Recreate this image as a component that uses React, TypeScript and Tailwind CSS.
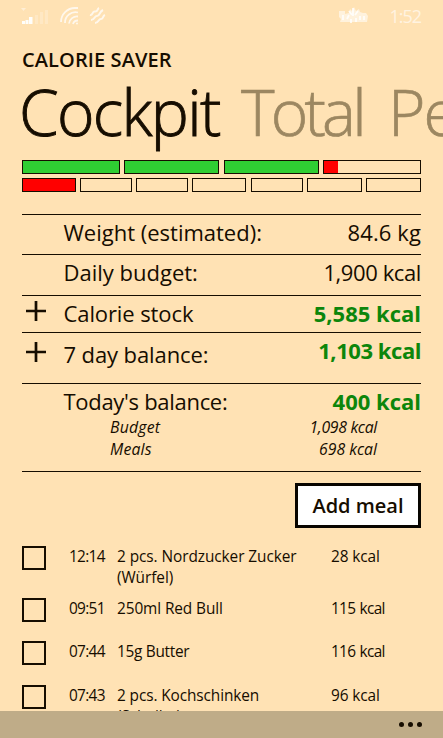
import React from "react";
import clsx from "clsx";

interface SummaryRowProps {
  label: string;
  value: string;
  expandable?: boolean;
  positive?: boolean;
  className?: string;
  labelClassName?: string;
  valueClassName?: string;
  iconClassName?: string;
}

interface Meal {
  time: string;
  name: string;
  kcal: string;
  className: string;
  nameClassName: string;
  kcalClassName: string;
}

const meals: Meal[] = [
  {
    time: "12:14",
    name: "2 pcs. Nordzucker Zucker (Würfel)",
    kcal: "28 kcal",
    className: "h-[52px]",
    nameClassName: "tracking-[-0.07px]",
    kcalClassName: "tracking-[-0.1px]",
  },
  {
    time: "09:51",
    name: "250ml Red Bull",
    kcal: "115 kcal",
    className: "h-[43px]",
    nameClassName: "tracking-[-0.1px]",
    kcalClassName: "tracking-[-0.7px] [word-spacing:1px]",
  },
  {
    time: "07:44",
    name: "15g Butter",
    kcal: "116 kcal",
    className: "h-[44px]",
    nameClassName: "tracking-[-0.3px]",
    kcalClassName: "tracking-[-0.7px] [word-spacing:1px]",
  },
  {
    time: "07:43",
    name: "2 pcs. Kochschinken (Scheibe)",
    kcal: "96 kcal",
    className: "h-[44px]",
    nameClassName: "tracking-[-0.1px]",
    kcalClassName: "tracking-[-0.1px]",
  },
];

const StatusBar = () => (
  <div className="flex h-8 shrink-0 items-start pl-[21px] pr-[22px] pt-[7px] text-white">
    <svg width="28" height="18" viewBox="0 0 28 18" fill="currentColor">
      <path d="M0 1h5l-2.5 3z" opacity=".45" />
      <path d="M1 14h3v3H1zM4.500 13h3v4h-3zM8 10h3.500v7H8z" opacity=".95" />
      <path d="M14 8h3v9h-3zM19 5h3v12h-3zM24 3h3v14h-3z" opacity=".22" />
    </svg>
    <svg
      className="ml-[11px]"
      width="19"
      height="18"
      viewBox="0 0 19 18"
      fill="none"
      stroke="currentColor"
      strokeWidth="1.8"
      opacity=".75"
    >
      <path d="M1 15A14 14 0 0 1 15 1h3M5 16A10.500 10.500 0 0 1 18 5.500M9 16.500A8 8 0 0 1 18 9.500M13 17A5 5 0 0 1 18 13.500" />
      <circle cx="17" cy="16.500" r="1" fill="currentColor" stroke="none" />
    </svg>
    <svg
      className="ml-[10px]"
      width="17"
      height="18"
      viewBox="0 0 17 18"
      fill="none"
      stroke="currentColor"
      strokeWidth="2"
      opacity=".75"
    >
      <path d="M1 8C4 9 3 4 6 4.500S8 2 10 1M2 13C6 13 5 9 8 9S10 5 14 3M6 16C10 16 9 12 12 12S13 9 16 8" />
    </svg>
    <svg
      className="ml-auto"
      width="31"
      height="17"
      viewBox="0 0 31 17"
      fill="currentColor"
    >
      <path
        d="M1 4h6v3l4-1 1-4 2 2 2-4 2 4 3-2 1 3 3 1h3l2 3-1 6H2l1-3-2-2z"
        opacity=".55"
      />
      <path
        d="M5 8v5M9 12l2-4M15 1v8M11 4l3 4M20 4l-3 4M13 12v4M18 11v4M22 9v4M26 9v4"
        stroke="currentColor"
        strokeWidth="1.8"
        opacity=".85"
      />
    </svg>
    <span className="ml-[20px] text-[18px] leading-[19px] tracking-[-1px] opacity-60">
      1:52
    </span>
  </div>
);

const Bar = ({ className, fill }: { className: string; fill?: string }) => (
  <div className={clsx("h-[14px] border border-[#160d00]", className)}>
    {fill && <div className={clsx("h-full", fill)} />}
  </div>
);

const ProgressBars = () => (
  <div className="mt-[8px] shrink-0">
    <div className="flex justify-between">
      <Bar className="w-[98px]" fill="bg-[#2fce33]" />
      <Bar className="w-[95px]" fill="bg-[#2fce33]" />
      <Bar className="w-[95px]" fill="bg-[#2fce33]" />
      <Bar className="w-[98px]" fill="w-[14px] bg-[#ff0000]" />
    </div>
    <div className="mt-1 flex justify-between">
      <Bar className="w-[54px]" fill="bg-[#ff0000]" />
      <Bar className="w-[52px]" />
      <Bar className="w-[52px]" />
      <Bar className="w-[54px]" />
      <Bar className="w-[52px]" />
      <Bar className="w-[55px]" />
      <Bar className="w-[55px]" />
    </div>
  </div>
);

const SummaryRow: React.FC<SummaryRowProps> = ({
  label,
  value,
  expandable,
  positive,
  className,
  labelClassName,
  valueClassName,
  iconClassName,
}) => (
  <div
    className={clsx(
      "flex shrink-0 items-start border-t border-[#160d00] text-[22px] leading-[34px]",
      className
    )}
  >
    <div className={clsx("w-[41.5px] pl-1", iconClassName)}>
      {expandable && (
        <svg width="20" height="20" viewBox="0 0 20 20" stroke="#160d00" strokeWidth="2.700">
          <path d="M0 10h20M10 0v20" />
        </svg>
      )}
    </div>
    <span className={labelClassName}>{label}</span>
    <span
      className={clsx(
        "ml-auto",
        positive && "font-bold text-[#0d860b]",
        valueClassName
      )}
    >
      {value}
    </span>
  </div>
);

const MealRow = ({ meal }: { meal: Meal }) => (
  <div className={clsx("flex shrink-0 items-start text-[15.4px] leading-[21px]", meal.className)}>
    <div className="size-6 border-2 border-[#160d00]" />
    <span className="ml-[23px] w-12 tracking-[-0.7px]">{meal.time}</span>
    <span className={clsx("w-[214px] pr-6", meal.nameClassName)}>{meal.name}</span>
    <span className={meal.kcalClassName}>{meal.kcal}</span>
  </div>
);

export default function App() {
  return (
    <div className="flex h-[738px] w-[443px] flex-col overflow-hidden bg-[#ffe2b4] font-['Open_Sans','Noto_Sans',sans-serif] text-[#160d00]">
      <StatusBar />
      <main className="flex min-h-0 flex-1 flex-col overflow-hidden px-[22px] pt-4">
        <h1 className="shrink-0 text-[20px] font-semibold leading-6 tracking-[0.1px]">
          CALORIE SAVER
        </h1>
        <div className="-ml-[3px] flex h-20 w-[600px] shrink-0 whitespace-nowrap text-[64px] font-light leading-[80px]">
          <span className="w-[222px] tracking-[-1.7px] [-webkit-text-stroke:0.9px_#160d00]">
            Cockpit
          </span>
          <span className="w-[147px] tracking-[-3.8px] text-[#9c8761] [-webkit-text-stroke:0.7px_#9c8761]">
            Total
          </span>
          <span className="tracking-[-2px] text-[#9c8761] [-webkit-text-stroke:0.7px_#9c8761]">
            Pe
          </span>
        </div>
        <ProgressBars />
        <div className="mt-[22px] shrink-0">
          <SummaryRow
            label="Weight (estimated):"
            value="84.6 kg"
            className="h-10"
            valueClassName="tracking-[0.1px]"
          />
          <SummaryRow
            label="Daily budget:"
            value="1,900 kcal"
            className="h-[41px]"
            valueClassName="tracking-[-0.4px]"
          />
          <SummaryRow
            label="Calorie stock"
            value="5,585 kcal"
            expandable
            positive
            className="h-[37px]"
            labelClassName="tracking-[-0.1px]"
            iconClassName="pt-[5px]"
          />
          <SummaryRow
            label="7 day balance:"
            value="1,103 kcal"
            expandable
            positive
            className="h-[51px]"
            labelClassName="pt-1 tracking-[-0.1px]"
            valueClassName="tracking-[-0.45px]"
            iconClassName="pt-[9px]"
          />
          <SummaryRow
            label="Today's balance:"
            value="400 kcal"
            positive
            className="h-[33px]"
            labelClassName="tracking-[-0.3px]"
          />
          <div className="h-[56px] border-b border-[#160d00] pl-[88px] pr-[44px] text-[15.8px] italic leading-[22px]">
            <div className="flex justify-between">
              <span className="tracking-[0.2px]">Budget</span>
              <span className="tracking-[-0.3px]">1,098 kcal</span>
            </div>
            <div className="flex justify-between">
              <span className="tracking-[0.2px]">Meals</span>
              <span>698 kcal</span>
            </div>
          </div>
        </div>
        <button className="mt-[11px] h-[45px] w-[126px] shrink-0 self-end border-[3px] border-[#080500] bg-white text-[20px] font-semibold leading-none">
          Add meal
        </button>
        <div className="mt-[18px] shrink-0">
          {meals.map((meal) => (
            <MealRow key={meal.time} meal={meal} />
          ))}
        </div>
      </main>
      <footer className="flex h-[27px] shrink-0 items-center justify-end gap-[3.5px] bg-[#bfac88] pr-[21px]">
        <span className="size-[5.5px] rounded-full bg-[#160d00]" />
        <span className="size-[5.5px] rounded-full bg-[#160d00]" />
        <span className="size-[5.5px] rounded-full bg-[#160d00]" />
      </footer>
    </div>
  );
}
